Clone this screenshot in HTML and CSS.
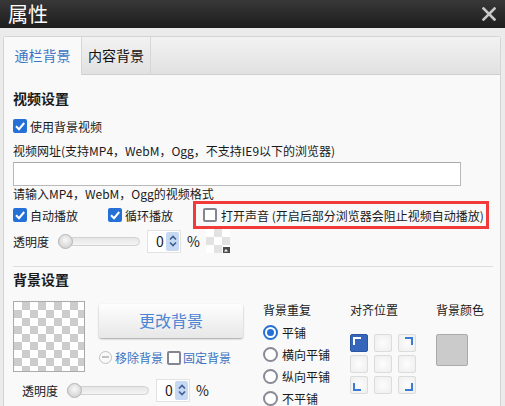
FILE: index.html
```html
<!DOCTYPE html>
<html lang="zh-CN">
<head>
    <meta charset="UTF-8">
    <title>属性</title>
    <link rel="stylesheet" href="styles.css">
</head>
<body>
    <div class="titlebar">
        <span class="title">属性</span>
        <span class="close">
            <svg width="14" height="14" viewBox="0 0 14 14"><path d="M1.5 1.5 L12.5 12.5 M12.5 1.5 L1.5 12.5" stroke="#c8c8c8" stroke-width="2.6" stroke-linecap="square"/></svg>
        </span>
    </div>

    <div class="wrap">
        <div class="panel">
            <div class="tabs">
                <div class="tab active">通栏背景</div>
                <div class="tab">内容背景</div>
            </div>

            <div class="content">
                <h3 class="sec-title first">视频设置</h3>
                <div class="row check-row">
                    <span class="cb on"><svg viewBox="0 0 14 14"><path d="M3 7.3 L6 10.2 L11.2 4" fill="none" stroke="#fff" stroke-width="2"/></svg></span>
                    <span>使用背景视频</span>
                </div>
                <div class="row label-row">视频网址(支持MP4，WebM，Ogg，不支持IE9以下的浏览器)</div>
                <div class="url-input"></div>
                <div class="hint">请输入MP4，WebM，Ogg的视频格式</div>

                <div class="row options">
                    <label class="opt">
                        <span class="cb on"><svg viewBox="0 0 14 14"><path d="M3 7.3 L6 10.2 L11.2 4" fill="none" stroke="#fff" stroke-width="2"/></svg></span>
                        <span>自动播放</span>
                    </label>
                    <label class="opt loop">
                        <span class="cb on"><svg viewBox="0 0 14 14"><path d="M3 7.3 L6 10.2 L11.2 4" fill="none" stroke="#fff" stroke-width="2"/></svg></span>
                        <span>循环播放</span>
                    </label>
                    <label class="opt sound">
                        <span class="cb"></span>
                        <span>打开声音 (开启后部分浏览器会阻止视频自动播放)</span>
                    </label>
                </div>

                <div class="row opacity">
                    <span class="op-label">透明度</span>
                    <span class="slider"><span class="knob"></span></span>
                    <span class="num"><span class="val">0</span><span class="spin"><svg width="8" height="14" viewBox="0 0 8 14"><path d="M1 5.5 L4 2.5 L7 5.5 M1 8.5 L4 11.5 L7 8.5" fill="none" stroke="#3d5f93" stroke-width="1.6"/></svg></span></span>
                    <span class="pct">%</span>
                    <span class="mini-swatch"><span class="mini-tag"><svg width="6" height="4" viewBox="0 0 6 4"><path d="M1 3.5 L3 1 L5 3.5 Z" fill="#fff"/></svg></span></span>
                </div>

                <div class="sep"></div>

                <h3 class="sec-title">背景设置</h3>
                <div class="bg-settings">
                    <div class="bg-left">
                        <div class="bg-top">
                            <div class="preview"></div>
                            <div class="bg-actions">
                                <div class="btn">更改背景</div>
                                <div class="links">
                                    <span class="remove"><span class="minus"></span>移除背景</span>
                                    <span class="cb small"></span>
                                    <span class="fix">固定背景</span>
                                </div>
                            </div>
                        </div>
                        <div class="row opacity opacity2">
                            <span class="op-label">透明度</span>
                            <span class="slider"><span class="knob"></span></span>
                            <span class="num"><span class="val">0</span><span class="spin"><svg width="8" height="14" viewBox="0 0 8 14"><path d="M1 5.5 L4 2.5 L7 5.5 M1 8.5 L4 11.5 L7 8.5" fill="none" stroke="#3d5f93" stroke-width="1.6"/></svg></span></span>
                            <span class="pct">%</span>
                        </div>
                    </div>

                    <div class="col repeat">
                        <div class="col-title">背景重复</div>
                        <div class="radio-row"><span class="radio on"></span>平铺</div>
                        <div class="radio-row"><span class="radio"></span>横向平铺</div>
                        <div class="radio-row"><span class="radio"></span>纵向平铺</div>
                        <div class="radio-row"><span class="radio"></span>不平铺</div>
                    </div>

                    <div class="col align">
                        <div class="col-title">对齐位置</div>
                        <div class="grid">
                            <span class="cell active tl"></span>
                            <span class="cell"></span>
                            <span class="cell tr"></span>
                            <span class="cell"></span>
                            <span class="cell"></span>
                            <span class="cell"></span>
                            <span class="cell bl"></span>
                            <span class="cell"></span>
                            <span class="cell br"></span>
                        </div>
                    </div>

                    <div class="col color">
                        <div class="col-title">背景颜色</div>
                        <div class="color-swatch"></div>
                    </div>
                </div>
            </div>
        </div>
    </div>
</body>
</html>
```

FILE: styles.css
```css
* {
    box-sizing: border-box;
}
body {
    margin: 0;
    width: 505px;
    height: 406px;
    overflow: hidden;
    background-color: #ebebeb;
    font-family: "Noto Sans CJK SC", "Noto Sans", sans-serif;
    font-size: 12px;
    color: #1a1a1a;
}
.titlebar {
    height: 28px;
    background: linear-gradient(#383838, #1d1d1d);
    display: flex;
    align-items: center;
    justify-content: space-between;
    padding: 0 9px 0 8px;
}
.title {
    color: #fff;
    font-size: 20px;
    line-height: 28px;
}
.close {
    display: flex;
    margin-top: -1px;
}
.wrap {
    padding: 8px 4px 0 3px;
}
.panel {
    border: 1px solid #d4d4d4;
    border-radius: 3px 3px 0 0;
    background-color: #f9f9f9;
    height: 380px;
}
.tabs {
    display: flex;
    height: 38px;
    background: linear-gradient(#f2f2f2, #e1e1e1);
    border-bottom: 1px solid #cfcfcf;
}
.tab {
    width: 69px;
    line-height: 37px;
    font-size: 14px;
    text-align: center;
    color: #111;
    border-right: 1px solid #d6d6d6;
}
.tab.active {
    width: 78px;
    color: #3b76c6;
    background-color: #f9f9f9;
    height: 38px;
    border-radius: 3px 0 0 0;
}
.content {
    padding: 0 8px 0 9px;
}
.sec-title {
    margin: 0;
    font-size: 14px;
    font-weight: bold;
    line-height: 20px;
    height: 20px;
    margin-top: 2px;
}
.sec-title.first {
    margin-top: 13px;
}
.row {
    display: flex;
    align-items: center;
    white-space: nowrap;
}
.check-row {
    height: 20px;
    margin-top: 8px;
    gap: 3px;
}
.cb {
    width: 14px;
    height: 14px;
    border-radius: 2px;
    background-color: #2570d6;
    display: inline-flex;
    flex-shrink: 0;
}
.cb svg {
    width: 14px;
    height: 14px;
}
.cb:not(.on) {
    background-color: #fff;
    border: 2px solid #858591;
}
.label-row {
    height: 20px;
    margin-top: 4px;
}
.url-input {
    width: 448px;
    height: 24px;
    margin-top: 2px;
    background-color: #fff;
    border: 1px solid #b9b9b9;
    border-top-color: #aaa;
}
.hint {
    line-height: 16px;
    height: 15px;
}
.options {
    height: 28px;
}
.opt {
    display: flex;
    align-items: center;
    gap: 3px;
}
.loop {
    margin-left: 30px;
}
.sound {
    margin-left: 20px;
    height: 28px;
    width: 296px;
    border: 3px solid #f33a3a;
    padding-left: 7px;
    gap: 4px;
}
.opacity {
    height: 24px;
}
.op-label {
    width: 45px;
}
.slider {
    width: 82px;
    height: 9px;
    border-radius: 5px;
    background: linear-gradient(#e6e6e6, #f4f4f4);
    border: 1px solid #d2d2d2;
    position: relative;
}
.knob {
    position: absolute;
    left: -1px;
    top: -4px;
    width: 15px;
    height: 15px;
    border-radius: 50%;
    background: radial-gradient(circle at 50% 40%, #f8f8f8, #c9c9c9);
    border: 1px solid #b5b5b5;
}
.num {
    display: flex;
    align-items: center;
    justify-content: space-between;
    margin-left: 7px;
    width: 34px;
    height: 23px;
    background-color: #fff;
    border: 1px solid #e2e2e2;
    padding: 0 1px 0 8px;
    font-size: 14px;
}
.spin {
    width: 13px;
    height: 19px;
    border-radius: 2px;
    background-color: #c7d8f2;
    display: flex;
    align-items: center;
    justify-content: center;
}
.pct {
    margin-left: 6px;
    font-size: 14px;
}
.mini-swatch {
    position: relative;
    width: 24px;
    height: 24px;
    margin-left: 6px;
    background: repeating-conic-gradient(#e2e2e2 0 25%, #fff 0 50%) 0 0 / 16px 16px;
}
.mini-tag {
    position: absolute;
    right: 0;
    bottom: 0;
    width: 7px;
    height: 6px;
    background-color: #4a4a4a;
    display: flex;
    align-items: center;
    justify-content: center;
}
.sep {
    height: 1px;
    background-color: #dedede;
    margin: 13px 0 0 0;
    width: 480px;
}
.bg-settings {
    display: flex;
    margin-top: 12px;
}
.bg-left {
    width: 250px;
}
.bg-top {
    display: flex;
}
.preview {
    width: 72px;
    height: 71px;
    border: 1px solid #aaa;
    background: repeating-conic-gradient(#cccccc 0 25%, #fff 0 50%) 0 0 / 16px 16px;
}
.bg-actions {
    margin-left: 14px;
    padding-top: 3px;
}
.btn {
    width: 144px;
    height: 34px;
    line-height: 33px;
    text-align: center;
    font-size: 16px;
    color: #4a84d2;
    border-radius: 3px;
    background: linear-gradient(#fefefe, #e7e7e7);
    box-shadow: 0 1px 2px rgba(0, 0, 0, 0.35);
}
.links {
    display: flex;
    align-items: center;
    margin-top: 11px;
    color: #3a73c2;
    white-space: nowrap;
}
.remove {
    display: flex;
    align-items: center;
    gap: 3px;
}
.minus {
    width: 13px;
    height: 13px;
    border-radius: 50%;
    border: 1.5px solid #c2c2c2;
    position: relative;
}
.minus::after {
    content: "";
    position: absolute;
    left: 2px;
    right: 2px;
    top: 4px;
    height: 2px;
    background-color: #c2c2c2;
}
.cb.small {
    margin-left: 4px;
    margin-right: 2px;
}
.opacity2 {
    margin-top: 6px;
    padding-left: 9px;
}
.col-title {
    line-height: 18px;
    height: 18px;
}
.repeat {
    width: 87px;
}
.repeat .col-title {
    margin-bottom: 2px;
}
.radio-row {
    display: flex;
    align-items: center;
    gap: 4px;
    height: 22px;
    white-space: nowrap;
}
.radio {
    width: 15px;
    height: 15px;
    border-radius: 50%;
    border: 2px solid #8a8a96;
    background-color: #fff;
    position: relative;
}
.radio.on {
    border-color: #2570d6;
}
.radio.on::after {
    content: "";
    position: absolute;
    left: 2px;
    top: 2px;
    width: 7px;
    height: 7px;
    border-radius: 50%;
    background-color: #2570d6;
}
.align {
    width: 86px;
}
.grid {
    display: grid;
    grid-template-columns: repeat(3, 18px);
    grid-auto-rows: 18px;
    column-gap: 6px;
    row-gap: 3px;
    margin-top: 15px;
}
.cell {
    position: relative;
    border: 1px solid #dcdcdc;
    border-radius: 2px;
    background: radial-gradient(circle, #fdfdfd, #eeeeee);
}
.cell.active {
    background: #3566bb;
    border-color: #2d56a0;
}
.cell::before {
    content: "";
    position: absolute;
    width: 6px;
    height: 6px;
}
.cell.tl::before {
    left: 2px;
    top: 2px;
    border-left: 2px solid #fff;
    border-top: 2px solid #fff;
}
.cell.tr::before {
    right: 2px;
    top: 2px;
    border-right: 2px solid #3b7bd8;
    border-top: 2px solid #3b7bd8;
}
.cell.bl::before {
    left: 2px;
    bottom: 2px;
    border-left: 2px solid #3b7bd8;
    border-bottom: 2px solid #3b7bd8;
}
.cell.br::before {
    right: 2px;
    bottom: 2px;
    border-right: 2px solid #3b7bd8;
    border-bottom: 2px solid #3b7bd8;
}
.color-swatch {
    width: 32px;
    height: 32px;
    margin-top: 15px;
    background-color: #cbcbcb;
    border: 1px solid #aaa;
    border-radius: 2px;
}
```
